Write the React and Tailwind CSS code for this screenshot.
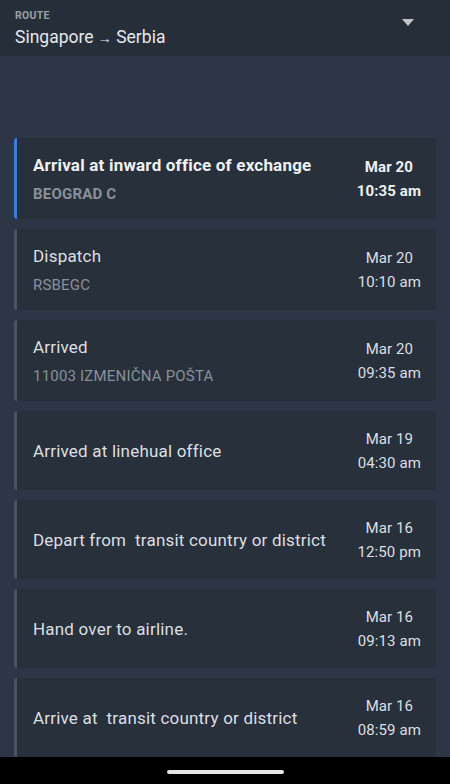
const EVENTS = [
  { title: "Arrival at inward office of exchange", place: "BEOGRAD C", date: "Mar 20", time: "10:35 am", current: true },
  { title: "Dispatch", place: "RSBEGC", date: "Mar 20", time: "10:10 am" },
  { title: "Arrived", place: "11003 IZMENIČNA POŠTA", date: "Mar 20", time: "09:35 am" },
  { title: "Arrived at linehual office", date: "Mar 19", time: "04:30 am" },
  { title: "Depart from  transit country or district", date: "Mar 16", time: "12:50 pm" },
  { title: "Hand over to airline.", date: "Mar 16", time: "09:13 am" },
  { title: "Arrive at  transit country or district", date: "Mar 16", time: "08:59 am" },
];

export default function App() {
  return (
    <div
      className="relative h-[784px] w-[450px] overflow-hidden bg-[#2d3647]"
      style={{ fontFamily: "Roboto, 'Noto Sans', sans-serif" }}
    >
      <header className="flex h-[56px] items-start justify-between bg-[#262e39] pl-[15px] pr-[36px] pt-[8px]">
        <div>
          <div className="text-[10.5px] font-bold leading-[15px] tracking-wide text-[#9aa0a8]">ROUTE</div>
          <div className="mt-[1px] text-[17.5px] leading-[26px] text-[#e6e8eb]">
            Singapore <span className="text-[14px]">→</span> Serbia
          </div>
        </div>
        <svg width="12" height="7" viewBox="0 0 12 7" className="mt-[11px]">
          <path d="M0 0 L12 0 L6 7 Z" fill="#c2c4c7" />
        </svg>
      </header>

      <main className="flex flex-col gap-[10px] px-[14px] pt-[82px]">
        {EVENTS.map((e, i) => (
          <div
            key={i}
            className={`flex min-h-[79px] items-center justify-between rounded-[3px] border-l-[3px] bg-[#28303b] py-[15px] pl-4 pr-[15px] ${
              e.current ? "border-[#3b7ddd]" : "border-[#4a5466]"
            }`}
          >
            <div>
              <div
                className={`whitespace-pre-wrap text-[17px] leading-6 tracking-[0.2px] ${
                  e.current ? "font-bold text-[#eef0f2]" : "text-[#dcdfe3]"
                }`}
              >
                {e.title}
              </div>
              {e.place && (
                <div
                  className={`mt-[7px] text-[15px] leading-5 tracking-[0.2px] text-[#8a9099] ${e.current ? "font-bold" : ""}`}
                >
                  {e.place}
                </div>
              )}
            </div>
            <div
              className={`text-center text-[15px] leading-6 tracking-[0.1px] ${
                e.current ? "font-bold text-[#eef0f2]" : "text-[#dcdfe3]"
              }`}
            >
              <div>{e.date}</div>
              <div>{e.time}</div>
            </div>
          </div>
        ))}
      </main>

      <div className="absolute bottom-0 left-0 flex h-[27px] w-full items-center justify-center bg-black">
        <div className="mt-[2px] h-[4px] w-[117px] rounded-full bg-[#e6e6e6]" />
      </div>
    </div>
  );
}
